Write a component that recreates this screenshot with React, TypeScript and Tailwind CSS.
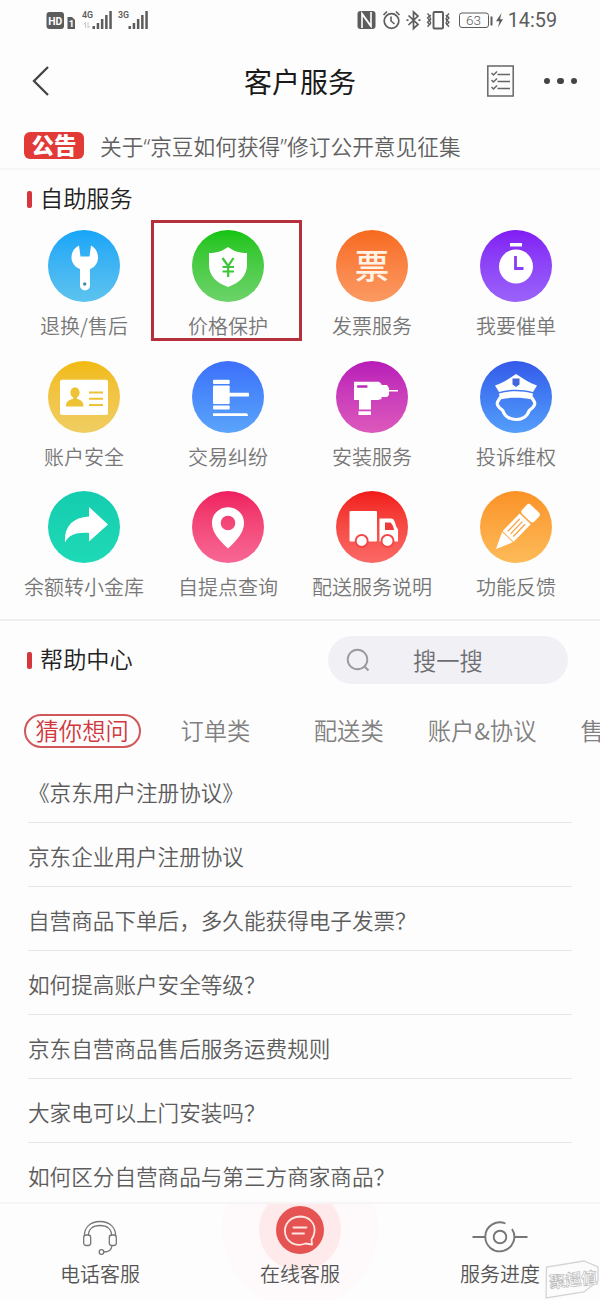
import { ReactNode } from 'react';

interface Service {
    label: string;
    color: string;
    icon: ReactNode;
    highlight?: boolean;
}

const services: Service[] = [
    {
        label: '退换/售后',
        color: 'from-[#14a5f8] to-[#5cc3ee]',
        icon: (
            <>
                <path d="M31 15.500C26 18 23.500 22 23.500 27.500C23.500 33 27 37 32 39V55.500a5 5 0 0 0 10 0V39C47 37 50 33 50 27.500C50 22 47.500 18 43 15.500L41.500 26.500H32.500Z" />
                <circle cx="36.700" cy="54" r="1.800" fill="#4b8eae" />
            </>
        ),
    },
    {
        label: '价格保护',
        color: 'from-[#10c40c] to-[#6cd368]',
        highlight: true,
        icon: (
            <>
                <path d="M36 17C30 21.500 24 23 17 23V35C17 46 25 53 36 57C47 53 55 46 55 35V23C48 23 42 21.500 36 17Z" />
                <path d="M30.500 28L36.200 36L41.500 28M36.200 36V47M30.500 37H42M30.500 41.500H42" fill="none" stroke="#3fc53a" strokeWidth="2.200" />
            </>
        ),
    },
    {
        label: '发票服务',
        color: 'from-[#f76a1c] to-[#fb9a62]',
        icon: null,
    },
    {
        label: '我要催单',
        color: 'from-[#8219f4] to-[#9a62fa]',
        icon: (
            <>
                <rect x="30" y="13" width="12" height="3.500" />
                <circle cx="36" cy="36.500" r="17" />
                <path d="M35.500 26V38.500H43.500" fill="none" stroke="#893df5" strokeWidth="2.800" />
            </>
        ),
    },
    {
        label: '账户安全',
        color: 'from-[#f2bb0c] to-[#f0ce62]',
        icon: (
            <>
                <rect x="12" y="18.700" width="48" height="35.300" rx="2" />
                <g fill="#edc235">
                    <ellipse cx="27" cy="31.500" rx="4.600" ry="5.300" />
                    <path d="M25 35h4v3c4 .8 6.500 2.500 6.500 7.500h-17.500c0-5 2.500-6.700 7-7.500Z" />
                    <path d="M41 30.500h14v2h-14ZM41 36.700h14v2h-14ZM41 43h14v2h-14Z" />
                </g>
            </>
        ),
    },
    {
        label: '交易纠纷',
        color: 'from-[#3d6ffa] to-[#5ba4fa]',
        icon: (
            <>
                <rect x="21" y="18.700" width="16.700" height="4.300" rx="1" />
                <rect x="21" y="24.500" width="16.700" height="18.500" rx="1" />
                <rect x="21" y="44.600" width="16.700" height="4" rx="1" />
                <rect x="37" y="31.800" width="20" height="3.600" rx=".5" />
                <path d="M21 52.300h33.500q1.500 0 1.500 2.600h-35Z" />
            </>
        ),
    },
    {
        label: '安装服务',
        color: 'from-[#b91ab8] to-[#dd58bc]',
        icon: (
            <>
                <path d="M18 20.700H43L45.500 23V24H51L53 27V29H62V30.500H53V34L51 36H45.500V38L42 39H35V48.500H23V39H18Z" />
                <rect x="22.500" y="50.300" width="12.500" height="3.700" />
                <rect x="21" y="24.300" width="10.500" height="2.500" rx=".8" fill="#bd28b5" />
            </>
        ),
    },
    {
        label: '投诉维权',
        color: 'from-[#3559ea] to-[#559efa]',
        icon: (
            <>
                <path d="M15 24.500C23 22 29 17.500 36 13C43 17.500 49 22 57 24.500L53 31C42 28 30 28 19 31Z" />
                <path d="M19 32.500C30 29.500 42 29.500 53 32.500L52 38.500C41 36 31 36 20 38.500Z" />
                <path d="M20.500 36C17.500 41 16 42 18.500 45.500C20 48 22 48 23 50C25 56 31 58.500 36 58.500C41 58.500 47 56 49 50C50 48 52 48 53.500 45.500C56 42 54.500 41 51.500 36" fill="none" stroke="#fff" strokeWidth="3.200" />
                <path d="M32.500 17.500H39.500V23.500L36 26L32.500 23.500Z" fill="#4366dd" />
            </>
        ),
    },
    {
        label: '余额转小金库',
        color: 'from-[#14cdb0] to-[#1ed9b5]',
        icon: <path d="M41 16L60 33.500L41 50.500V42C29 41 21 43.500 17 51.500C16 36 24 26.500 41 25.500Z" />,
    },
    {
        label: '自提点查询',
        color: 'from-[#ef1d60] to-[#f76795]',
        icon: (
            <path
                fillRule="evenodd"
                d="M36 16.300C27 16.300 20 23 20 32C20 42 28 50 36 57.500C44 50 52 42 52 32C52 23 45 16.300 36 16.300ZM36 24.700A7.300 7.300 0 1 1 36 39.300A7.300 7.300 0 1 1 36 24.700Z"
            />
        ),
    },
    {
        label: '配送服务说明',
        color: 'from-[#f11818] to-[#fb6966]',
        icon: (
            <>
                <rect x="13.500" y="20" width="27.500" height="30.500" rx="1" />
                <path d="M43.500 27.500H55C58 27.500 59 31 60 35L62 38.500V50.500H43.500Z" />
                <path d="M49 31.500H54.500C56.500 33 57.500 36 58 39H49Z" fill="#ef3a3a" />
                <circle cx="25.700" cy="50" r="6" stroke="#f34848" strokeWidth="2" />
                <circle cx="51.500" cy="50" r="6" stroke="#f34848" strokeWidth="2" />
            </>
        ),
    },
    {
        label: '功能反馈',
        color: 'from-[#fa9225] to-[#fdbb58]',
        icon: (
            <g transform="translate(16 58) rotate(44)">
                <path d="M0 0L-7.500 -16.500H7.500Z" />
                <rect x="-7.700" y="-42" width="15.400" height="24.500" />
                <rect x="-8.500" y="-56" width="17" height="12.500" rx="3" />
                <path d="M-3.800 -38V-21M0 -38V-21M3.800 -38V-21" stroke="#f9a443" strokeWidth="1.300" />
            </g>
        ),
    },
];

const tabs = ['猜你想问', '订单类', '配送类', '账户&协议', '售后类'];

const questions = [
    '《京东用户注册协议》',
    '京东企业用户注册协议',
    '自营商品下单后，多久能获得电子发票？',
    '如何提高账户安全等级？',
    '京东自营商品售后服务运费规则',
    '大家电可以上门安装吗？',
    '如何区分自营商品与第三方商家商品？',
];

const Signal = ({ name }: { name: string }) => (
    <svg width="31" height="20" viewBox="0 0 31 20" fill="#5c5c5c">
        <text x="0" y="8" fontSize="9.500" fontWeight="600" fontFamily="Roboto, sans-serif" textLength="11" lengthAdjust="spacingAndGlyphs">{name}</text>
        {name === '4G' && <path d="M3.500 18V12.500L1.500 14.500M6 12V18L8 16" fill="none" stroke="#c9c9c9" />}
        <path d="M10.500 16h2.500v3h-2.500ZM14.700 13h2.500v6h-2.500ZM18.900 9h2.500v10h-2.500ZM23.100 5h2.500v14h-2.500ZM27.300 1h2.500v18h-2.500Z" />
    </svg>
);

const StatusBar = () => (
    <div className="flex h-10 items-center pl-[46px] pr-[43px] text-[#5c5c5c]">
        <svg width="30" height="20" viewBox="0 0 30 20" fill="#5c5c5c">
            <rect x=".5" y="2" width="17.500" height="17" rx="3" />
            <path d="M21.500 7H26L29 10V19H21.500Z" />
            <text x="2.300" y="14.700" fontSize="11" fontWeight="700" fill="#fff" fontFamily="Roboto, sans-serif" textLength="14" lengthAdjust="spacingAndGlyphs">HD</text>
            <text x="22.700" y="17" fontSize="9.500" fontWeight="700" fill="#fff" fontFamily="Roboto, sans-serif">1</text>
        </svg>
        <div className="ml-[6px] flex gap-[5px]">
            <Signal name="4G" />
            <Signal name="3G" />
        </div>
        <svg className="ml-auto" width="147" height="22" viewBox="0 0 147 22" fill="none" stroke="#5c5c5c">
            {/* nfc */}
            <rect x=".5" y="2" width="18" height="18" rx="3" fill="#5c5c5c" stroke="none" />
            <path d="M5 19V4.500L14 17V3M5 5L14 17.500" stroke="#fff" strokeWidth="1.600" />
            {/* alarm */}
            <circle cx="34.500" cy="12" r="7.300" strokeWidth="1.700" />
            <path d="M34 7.500V12L37.500 15M26.500 6L30 2.500M42.500 6L39 2.500" strokeWidth="1.600" />
            {/* bluetooth */}
            <path d="M51.500 6.500L61 15.500L56.500 19.500V3L61 7L51.500 16" strokeWidth="1.700" />
            <path d="M49.500 11.200h2M61.500 11.200h2" strokeWidth="1.700" />
            {/* vibrate */}
            <rect x="76.500" y="3" width="9.500" height="16.500" rx="1" strokeWidth="1.900" />
            <path d="M70.500 4.500l2 2.200-2 2.200 2 2.200-2 2.200 2 2.200-2 2.200M73.700 6l-1 2 1 2-1 2 1 2-1 2M92 4.500l-2 2.200 2 2.200-2 2.200 2 2.200-2 2.200 2 2.200M89 6l1 2-1 2 1 2-1 2 1 2" strokeWidth="1.300" />
            {/* battery */}
            <rect x="102.500" y="4" width="29" height="14.500" rx="2.500" />
            <text x="109" y="16" fontSize="13.500" fill="#5c5c5c" stroke="none" fontFamily="Roboto, sans-serif">63</text>
            <path d="M134.500 7.500V16.500" strokeWidth="2" />
            <path d="M144.500 4L139 12.300H142.500L141 18.500L146 10.300H143Z" fill="#5c5c5c" stroke="none" />
        </svg>
        <span className="ml-[4px] pt-px font-[Roboto,sans-serif] text-[19.800px] leading-none font-normal">14:59</span>
    </div>
);

const SectionTitle = ({ children }: { children: ReactNode }) => (
    <h2 className="flex items-center gap-[8px] text-[23.200px] leading-8 text-[#222]">
        <span className="mt-[4px] h-[17px] w-[5px] rounded-[2px] bg-[#d5363b]" />
        {children}
    </h2>
);

const ServiceItem = ({ service }: { service: Service }) => (
    <div className="relative flex h-[130.500px] flex-col items-center">
        <div className={`flex size-[72px] items-center justify-center rounded-full bg-linear-to-b ${service.color}`}>
            {service.icon ? (
                <svg width="72" height="72" viewBox="0 0 72 72" fill="#fff">{service.icon}</svg>
            ) : (
                <span className="pb-[3px] text-[34.500px] leading-none font-medium text-[#fff3e6]">票</span>
            )}
        </div>
        <span className="mt-[9px] text-[20px] leading-[30px] whitespace-nowrap text-[#777]">{service.label}</span>
        {service.highlight && <div className="absolute -top-[10px] -left-[5px] h-[121px] w-[151px] border-[3px] border-[#b5303b]" />}
    </div>
);

const BottomBar = () => (
    <nav className="relative z-10 grid h-[98px] shrink-0 grid-cols-3 overflow-hidden border-t-2 border-[#f6f4f5] bg-[#fdfdfd] text-[20px] leading-[30px] text-[#555]">
        <div className="flex flex-col items-center">
            <svg className="mt-[14px]" width="40" height="40" viewBox="0 0 40 40" fill="none" stroke="#777" strokeWidth="1.300">
                <path d="M4.500 18C4 9 11 3.500 20 3.500C29 3.500 36 9 35.500 18M8.500 18C8 11 13 7.500 20 7.500C27 7.500 32 11 31.500 18" />
                <rect x="3.700" y="17" width="7" height="10.500" rx="2.500" />
                <rect x="29.300" y="17" width="7" height="10.500" rx="2.500" />
                <path d="M32 27.500C31.500 32 29 34 24 34" />
                <circle cx="21.500" cy="34" r="2.300" />
            </svg>
            <span className="mt-px">电话客服</span>
        </div>
        <div className="flex flex-col items-center">
            <svg className="-mb-[41px]" width="160" height="96" viewBox="0 0 160 96">
                <circle cx="80" cy="26" r="78" fill="#fefafb" />
                <circle cx="80" cy="26" r="41" fill="#feeaea" />
                <circle cx="80" cy="26" r="24" fill="#e65353" />
                <g transform="translate(0 -1)" fill="none" stroke="#ffe7e2" strokeWidth="1.800" strokeLinecap="round" strokeLinejoin="round">
                    <path d="M91.500 36.500L92 41.500L85.500 40.500C78 43.500 70 41 66.500 34.500C62 25 67.500 14.500 79.500 13.500C90 13.500 95.500 21 94.500 29C94 32 93 34.500 91.500 36.500Z" />
                    <path d="M73.500 24.500H86.500M72.500 30.500H84" />
                </g>
            </svg>
            <span className="z-10">在线客服</span>
        </div>
        <div className="flex flex-col items-center">
            <svg className="mt-[14px]" width="56" height="40" viewBox="0 0 56 40" fill="none" stroke="#777" strokeWidth="1.900">
                <circle cx="28" cy="19" r="6.300" />
                <path d="M33.500 5.500A14.500 14.500 0 1 0 40 11M.5 19H13.500M42.500 19H55.500" />
            </svg>
            <span className="mt-px">服务进度</span>
        </div>
        <div className="absolute right-0 bottom-0 h-[40px] w-[56px]">
            <svg width="56" height="40" viewBox="0 0 56 40">
                <path d="M2 38L2.500 7L40 1L54 7V21L40 32Z" fill="#fcfcfc" stroke="#d4d4d4" strokeWidth="1.300" />
                <text x="6" y="28" fontSize="16" fontWeight="700" fill="#fff" stroke="#bdbdbd" strokeWidth=".7" fontFamily="'Noto Sans CJK SC', sans-serif" transform="rotate(-6 6 28)">聚超值</text>
            </svg>
        </div>
    </nav>
);

const App = () => {
    return (
        <div lang="zh-CN" className="flex h-[1300px] w-[600px] flex-col overflow-hidden bg-[#fdfdfd] font-['Noto_Sans_CJK_SC',sans-serif] font-[350]">
            <StatusBar />
            <header className="grid h-[82px] grid-cols-[100px_1fr_100px] items-center pr-[22px] pl-[32px]">
                <svg width="18" height="30" viewBox="0 0 18 30" fill="none" stroke="#444" strokeWidth="2.300">
                    <path d="M16 1L2 15L16 29" />
                </svg>
                <h1 className="pr-[10px] text-center text-[28px] leading-10 font-normal text-[#1a1a1a]">客户服务</h1>
                <div className="flex items-center justify-between">
                    <svg className="ml-[9px]" width="27" height="32" viewBox="0 0 27 32" fill="none" stroke="#666" strokeWidth="1.500">
                        <rect x=".8" y="1" width="25.400" height="30" />
                        <path d="M10.500 9.500H23M10.500 16.500H23M10.500 23.500H23" />
                        <path d="M4.500 8L6.500 10L10 6.500M4.500 15L6.500 17L10 13.500M4.500 22L6.500 24L10 20.500" />
                    </svg>
                    <div className="flex gap-[7px] pr-px">
                        <span className="size-[6.500px] rounded-full bg-[#444]" />
                        <span className="size-[6.500px] rounded-full bg-[#444]" />
                        <span className="size-[6.500px] rounded-full bg-[#444]" />
                    </div>
                </div>
            </header>
            <div className="flex h-[48px] items-center border-b-2 border-[#f6f4f4] pl-[24px]">
                <span className="flex h-[27px] w-[60px] items-center justify-center rounded-[6px] bg-[#e23a37] pb-px text-[22.500px] leading-none font-black text-white">公告</span>
                <p className="ml-[16px] pt-[3px] text-[21.700px] leading-8 whitespace-nowrap text-[#606060]">
                    关于<span className="font-['Noto_Sans']">“</span>京豆如何获得<span className="font-['Noto_Sans']">”</span>修订公开意见征集
                </p>
            </div>
            <section className="h-[451px] border-b-2 border-[#f0eff0] px-[12px] pt-[11px]">
                <div className="pl-[15px]">
                    <SectionTitle>自助服务</SectionTitle>
                </div>
                <div className="mt-[17px] grid grid-cols-4">
                    {services.map((service) => (
                        <ServiceItem key={service.label} service={service} />
                    ))}
                </div>
            </section>
            <section className="min-h-0 flex-1">
                <div className="flex items-start justify-between pt-[15px] pr-[32px] pl-[27px]">
                    <div className="pt-[6px]">
                        <SectionTitle>帮助中心</SectionTitle>
                    </div>
                    <div className="flex h-[48px] w-[240px] items-center rounded-full bg-[#f1f0f4] pl-[18px] text-[23.300px] text-[#6d6d72]">
                        <svg width="24" height="24" viewBox="0 0 24 24" fill="none" stroke="#9a9a9f" strokeWidth="1.900">
                            <circle cx="11.500" cy="11.500" r="9.800" />
                            <path d="M18.500 18.500L22.500 22.500" />
                        </svg>
                        <span className="ml-[43px]">搜一搜</span>
                    </div>
                </div>
                <div className="mt-[29px] ml-[15.500px] flex h-[35px] overflow-hidden">
                    {tabs.map((tab, i) => (
                        <div key={tab} className="flex w-[133.300px] shrink-0 items-center justify-center text-[23.300px] leading-8 whitespace-nowrap">
                            {i === 0 ? (
                                <span className="flex h-[34px] w-[117px] items-center justify-center rounded-full border-2 border-[#d0585c] pb-px text-[#d0383d]">{tab}</span>
                            ) : (
                                <span className="pb-px text-[#808080]">{tab}</span>
                            )}
                        </div>
                    ))}
                </div>
                <ul className="mt-[11px] px-[28px]">
                    {questions.map((question) => (
                        <li key={question} className="flex h-[64px] items-center border-b border-[#e6e6e6] pt-[4px] text-[21.600px] whitespace-nowrap text-[#5c5c5c]">
                            {question}
                        </li>
                    ))}
                </ul>
            </section>
            <BottomBar />
        </div>
    );
};

export default App;
